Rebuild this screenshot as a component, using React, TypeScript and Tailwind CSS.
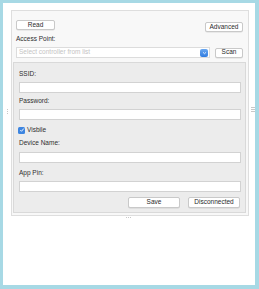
import React from "react";

const font = { fontFamily: '"Liberation Sans", Arial, sans-serif' };

function Btn({ children, className = "" }: { children: React.ReactNode; className?: string }) {
  return (
    <div
      className={`flex items-center justify-center bg-white border border-[#c9c9c9] rounded-[2px] shadow-[0_0.5px_0.5px_rgba(0,0,0,0.12)] text-[6.5px] leading-none text-[#2a2a2a] ${className}`}
    >
      {children}
    </div>
  );
}

function Input() {
  return <div className="h-[11px] ml-[5px] mr-[4px] bg-white border border-[#d2d2d2]" />;
}

function Label({ children, className = "" }: { children: React.ReactNode; className?: string }) {
  return <div className={`h-[8px] leading-[8px] text-[6.5px] text-[#2e2e2e] ${className}`}>{children}</div>;
}

export default function App() {
  return (
    <div
      style={font}
      className="relative w-[259px] h-[289px] bg-white border-t-[3px] border-l-[3px] border-r-[4px] border-b-[4px] border-[#a7d9e5] box-border"
    >
      <div className="relative mt-[7px] ml-[8px] w-[238px] h-[206px] bg-[#f8f8f8] border border-[#dedede] flex flex-col">
        {/* top row */}
        <div className="flex items-start mt-[9px] pl-[4px] pr-[5px] h-[12px]">
          <Btn className="w-[39px] h-[10px]">Read</Btn>
          <div className="flex-1" />
          <Btn className="w-[38px] h-[10px] mt-[2px]">Advanced</Btn>
        </div>
        <Label className="mt-[3px] ml-[4px]">Access Point:</Label>
        <div className="flex items-center mt-[4px] pl-[4px] pr-[5px] h-[11px]">
          <div className="flex-1 h-[11px] bg-white border border-[#dcdcdc] flex items-center pl-[2px] pr-[1px]">
            <span className="text-[6.5px] leading-none text-[#c4c4c4] flex-1">Select controller from list</span>
            <div className="w-[8px] h-[8px] rounded-[2px] bg-gradient-to-b from-[#6aa8f0] to-[#2f7be0] flex items-center justify-center">
              <svg width="5" height="4" viewBox="0 0 5 4">
                <path d="M1 1.3 L2.5 2.7 L4 1.3" stroke="white" strokeWidth="0.8" fill="none" />
              </svg>
            </div>
          </div>
          <Btn className="w-[28px] h-[10px] ml-[5px]">Scan</Btn>
        </div>
        {/* group box */}
        <div className="mt-[4px] ml-[1px] mr-[2px] bg-[#ececec] border border-[#d9d9d9] flex flex-col">
          <Label className="mt-[7px] ml-[5px]">SSID:</Label>
          <div className="mt-[4px]"><Input /></div>
          <Label className="mt-[4px] ml-[5px]">Password:</Label>
          <div className="mt-[4px]"><Input /></div>
          <div className="mt-[5px] h-[10px] ml-[4px] flex items-center">
            <div className="w-[7px] h-[7px] rounded-[1.5px] bg-[#3d85e0] flex items-center justify-center">
              <svg width="6" height="6" viewBox="0 0 6 6">
                <path d="M1.3 3.1 L2.5 4.3 L4.8 1.5" stroke="white" strokeWidth="0.9" fill="none" />
              </svg>
            </div>
            <span className="ml-[2px] text-[6.5px] leading-none text-[#2e2e2e]">Visbile</span>
          </div>
          <Label className="mt-[4px] ml-[5px]">Device Name:</Label>
          <div className="mt-[5px]"><Input /></div>
          <Label className="mt-[6px] ml-[5px]">App Pin:</Label>
          <div className="mt-[4px]"><Input /></div>
          <div className="mt-[5px] mb-[4px] flex justify-end pr-[5px] h-[11px]">
            <Btn className="w-[52px] h-[11px]">Save</Btn>
            <Btn className="w-[52px] h-[11px] ml-[8px]">Disconnected</Btn>
          </div>
        </div>
      </div>
      {/* resize handles */}
      <div className="absolute left-[4px] top-[106px] flex flex-col gap-[1px]">
        <div className="w-[1px] h-[1px] bg-[#c8c8c8]" />
        <div className="w-[1px] h-[1px] bg-[#c8c8c8]" />
        <div className="w-[1px] h-[1px] bg-[#c8c8c8]" />
      </div>
      <div className="absolute left-[248px] top-[104px] flex flex-col gap-[1px]">
        <div className="w-[4px] h-[1px] bg-[#c8c8c8]" />
        <div className="w-[4px] h-[1px] bg-[#c8c8c8]" />
        <div className="w-[4px] h-[1px] bg-[#c8c8c8]" />
      </div>
      <div className="absolute left-[123px] top-[214px] flex gap-[1px]">
        <div className="w-[1px] h-[1px] bg-[#c8c8c8]" />
        <div className="w-[1px] h-[1px] bg-[#c8c8c8]" />
        <div className="w-[1px] h-[1px] bg-[#c8c8c8]" />
      </div>
    </div>
  );
}
